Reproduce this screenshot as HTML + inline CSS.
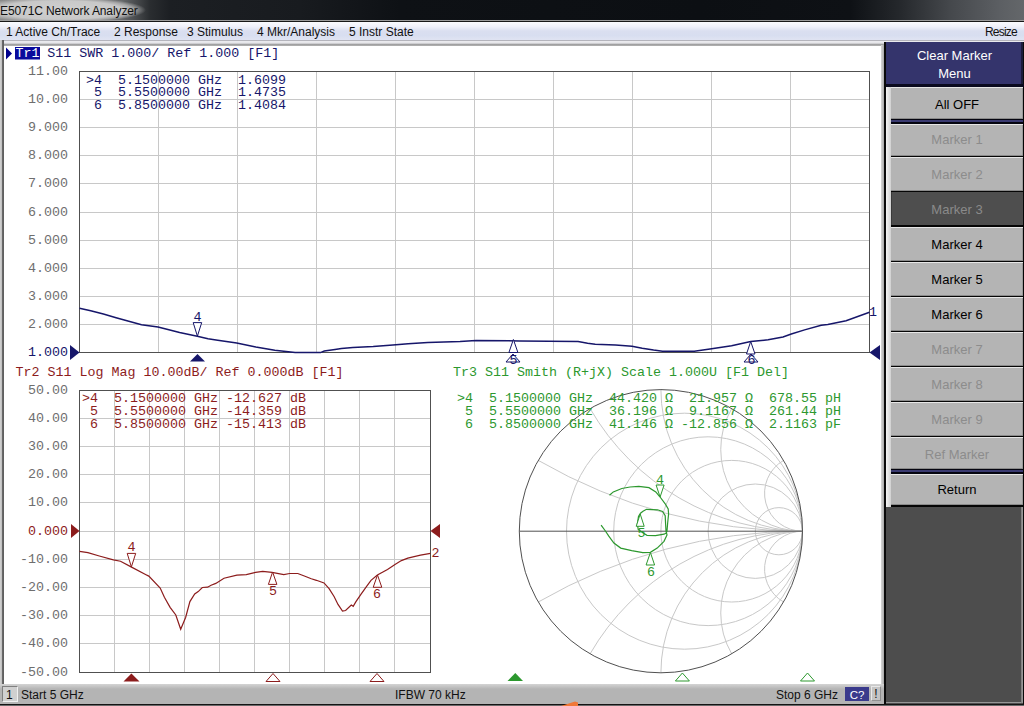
<!DOCTYPE html>
<html><head><meta charset="utf-8">
<style>
html,body{margin:0;padding:0;}
body{width:1024px;height:706px;position:relative;overflow:hidden;background:#4d4d4d;font-family:"Liberation Sans", sans-serif;}
.abs{position:absolute;}
#title{left:0;top:0;width:1024px;height:20px;background:radial-gradient(ellipse 86px 13px at 60px 10px,rgba(208,208,208,1) 0%,rgba(200,200,200,1) 72%,rgba(180,180,180,0.8) 86%,rgba(150,150,150,0) 100%),linear-gradient(90deg,#8a8a8a 0px,#6a6c6e 120px,#2a2d30 150px,#1c1f23 170px,#181b1f 300px,#0e1115 400px,#0c0f13 700px,#0e1115 850px,#25282c 900px,#45484c 950px,#5c5f63 1000px,#64676a 1024px);}
#title span{position:absolute;left:0;top:4px;font-size:12px;color:#101010;letter-spacing:-0.1px;}
#tline{left:0;top:20px;width:1024px;height:1px;background:#9c9c9c;}
#tline2{left:0;top:21px;width:1024px;height:1px;background:#181818;}
#menu{left:0;top:22px;width:1024px;height:18px;background:linear-gradient(#fbfbfe 0%,#f0f1fa 25%,#dadff0 50%,#d8def0 75%,#e0e4f2 100%);font-size:12px;color:#111;}
#menu span{position:absolute;top:3px;}
#mline{left:0;top:40px;width:1024px;height:6px;background:linear-gradient(#b4b4bc 0px,#b4b4bc 1px,#ececf0 1px,#e4e4e8 3px,#8a8a8a 5px,#d0d0d0 6px);}
#main{left:4px;top:46px;width:878px;height:638px;background:#fff;}
#lborder{left:0;top:40px;width:4px;height:664px;background:linear-gradient(90deg,#d4d4d4 0px,#bcbcbc 2px,#6c6c6c 2px,#5c5c5c 4px);}
#rstrip{left:881px;top:45px;width:3px;height:659px;background:linear-gradient(90deg,#d8d8d8,#a8a8a8);}
#rline{left:884px;top:42px;width:2px;height:662px;background:#0a0a0a;}
#status{left:0;top:684px;width:884px;height:20px;background:linear-gradient(#d4d4d4,#b4b4b4 25%,#b4b4b4);font-size:12px;color:#111;}
#status span{position:absolute;top:4px;}
#bline{left:0;top:704px;width:1024px;height:1px;background:#141414;}
#bline2{left:0;top:705px;width:1024px;height:1px;background:#6a6a6a;}
#panel{left:886px;top:42px;width:137px;height:661px;background:#4d4d4d;box-shadow:inset 0 -1px 0 #969696;}
#rpedge{left:1021px;top:507px;width:2px;height:196px;background:linear-gradient(90deg,#7a7a7a,#a0a0a0);}
#rpedge2{left:1023px;top:42px;width:1px;height:664px;background:#0a0a0a;}
#hdr{left:886px;top:42px;width:137px;height:42px;background:#34346c;box-shadow:inset -2px 0 0 #1c1c3c;color:#fff;font-size:13px;text-align:center;line-height:18px;}
#hdrline{left:886px;top:84px;width:138px;height:3px;background:#0a0a1e;}
#kstrip{left:886px;top:87px;width:5px;height:420px;background:linear-gradient(90deg,#f4f4f4,#d0d0d0);}
#kbg{left:891px;top:87px;width:133px;height:420px;background:#050505;}
.sep{position:absolute;left:891px;width:132px;height:5px;background:linear-gradient(#050510 0,#050510 25%,#3a3a70 30%,#3a3a70 65%,#050510 70%);}
.key{position:absolute;left:891px;width:132px;font-size:13px;text-align:center;background:#b4b4b4;box-shadow:inset 0 1px 0 #e6e6e6,inset 0 -1px 0 #8a8a8a,inset -1px 0 0 #9a9a9a;}
#orange{left:562px;top:701px;width:16px;height:10px;background:#f07838;border-radius:50% 50% 0 0;}
svg text.m{font-family:"Liberation Mono", monospace;font-size:13.33px;}
</style></head><body>
<div id="title" class="abs"><span>E5071C Network Analyzer</span></div>
<div id="tline" class="abs"></div>
<div id="tline2" class="abs"></div>
<div id="menu" class="abs"><span style="left:6px">1 Active Ch/Trace</span><span style="left:114px">2 Response</span><span style="left:187px">3 Stimulus</span><span style="left:257px">4 Mkr/Analysis</span><span style="left:349px">5 Instr State</span><span style="left:985px;letter-spacing:-0.8px">Resize</span></div>
<div id="mline" class="abs"></div>
<div id="lborder" class="abs"></div>
<div id="main" class="abs"></div>
<div id="rstrip" class="abs"></div>
<div id="panel" class="abs"></div>
<div id="rline" class="abs"></div>
<div id="rpedge" class="abs"></div>
<div id="rpedge2" class="abs"></div>
<div id="hdr" class="abs"><div style="padding-top:5px">Clear Marker<br>Menu</div></div>
<div id="hdrline" class="abs"></div>
<div id="kstrip" class="abs"></div>
<div id="kbg" class="abs"></div>
<div class="sep" style="top:119px"></div>
<div class="sep" style="top:469px"></div>
<div class="key" style="top:87px;height:32px;line-height:35.0px;color:#000000;">All OFF</div>
<div class="key" style="top:124px;height:32px;line-height:31.0px;color:#8c8c8c;">Marker 1</div>
<div class="key" style="top:157px;height:34px;line-height:35.0px;color:#8c8c8c;">Marker 2</div>
<div class="key" style="top:192px;height:33px;line-height:35.0px;background:#4e4e4e;color:#8a8a8a;box-shadow:inset 1px 0 0 #3a3a3a;">Marker 3</div>
<div class="key" style="top:227px;height:34px;line-height:35.0px;color:#000000;">Marker 4</div>
<div class="key" style="top:262px;height:34px;line-height:35.0px;color:#000000;">Marker 5</div>
<div class="key" style="top:297px;height:34px;line-height:35.0px;color:#000000;">Marker 6</div>
<div class="key" style="top:332px;height:34px;line-height:35.0px;color:#8c8c8c;">Marker 7</div>
<div class="key" style="top:367px;height:34px;line-height:35.0px;color:#8c8c8c;">Marker 8</div>
<div class="key" style="top:402px;height:34px;line-height:35.0px;color:#8c8c8c;">Marker 9</div>
<div class="key" style="top:437px;height:32px;line-height:35.0px;color:#8c8c8c;">Ref Marker</div>
<div class="key" style="top:474px;height:31px;line-height:31.0px;color:#000000;">Return</div>
<div id="status" class="abs"><div class="abs" style="left:2px;top:2px;width:14px;height:14px;background:#d0d0d0;border:1px solid #808080;border-right-color:#f0f0f0;border-bottom-color:#f0f0f0;"></div><span style="left:6px">1</span><span style="left:21px">Start 5 GHz</span><span style="left:395px">IFBW 70 kHz</span><span style="left:776px">Stop 6 GHz</span><div class="abs" style="left:845px;top:3px;width:24px;height:14px;background:#3a3a8c;color:#fff;text-align:center;font-size:11.5px;line-height:16px;">C?</div><div class="abs" style="left:871px;top:2px;width:8px;height:13px;background:#c4c4c4;border:1px solid #e8e8e8;border-right-color:#909090;border-bottom-color:#909090;text-align:center;line-height:15px;">!</div></div>
<div id="bline" class="abs"></div>
<div id="bline2" class="abs"></div>

<svg class="abs" style="left:0;top:0" width="1024" height="706" viewBox="0 0 1024 706">
<line x1="158.5" y1="71.5" x2="158.5" y2="352.5" stroke="#c8c8c8" stroke-width="1"/>
<line x1="237.5" y1="71.5" x2="237.5" y2="352.5" stroke="#c8c8c8" stroke-width="1"/>
<line x1="316.5" y1="71.5" x2="316.5" y2="352.5" stroke="#c8c8c8" stroke-width="1"/>
<line x1="395.5" y1="71.5" x2="395.5" y2="352.5" stroke="#c8c8c8" stroke-width="1"/>
<line x1="474.5" y1="71.5" x2="474.5" y2="352.5" stroke="#c8c8c8" stroke-width="1"/>
<line x1="553.5" y1="71.5" x2="553.5" y2="352.5" stroke="#c8c8c8" stroke-width="1"/>
<line x1="632.5" y1="71.5" x2="632.5" y2="352.5" stroke="#c8c8c8" stroke-width="1"/>
<line x1="711.5" y1="71.5" x2="711.5" y2="352.5" stroke="#c8c8c8" stroke-width="1"/>
<line x1="790.5" y1="71.5" x2="790.5" y2="352.5" stroke="#c8c8c8" stroke-width="1"/>
<line x1="79.5" y1="99.5" x2="869.5" y2="99.5" stroke="#c8c8c8" stroke-width="1"/>
<line x1="79.5" y1="127.5" x2="869.5" y2="127.5" stroke="#c8c8c8" stroke-width="1"/>
<line x1="79.5" y1="155.5" x2="869.5" y2="155.5" stroke="#c8c8c8" stroke-width="1"/>
<line x1="79.5" y1="183.5" x2="869.5" y2="183.5" stroke="#c8c8c8" stroke-width="1"/>
<line x1="79.5" y1="212.5" x2="869.5" y2="212.5" stroke="#c8c8c8" stroke-width="1"/>
<line x1="79.5" y1="240.5" x2="869.5" y2="240.5" stroke="#c8c8c8" stroke-width="1"/>
<line x1="79.5" y1="268.5" x2="869.5" y2="268.5" stroke="#c8c8c8" stroke-width="1"/>
<line x1="79.5" y1="296.5" x2="869.5" y2="296.5" stroke="#c8c8c8" stroke-width="1"/>
<line x1="79.5" y1="324.5" x2="869.5" y2="324.5" stroke="#c8c8c8" stroke-width="1"/>
<rect x="79.5" y="71.5" width="790.0" height="281.0" fill="none" stroke="#505050" stroke-width="1"/>
<text x="68" y="75.3" text-anchor="end" fill="#6e6e6e" class="m">11.00</text>
<text x="68" y="103.3" text-anchor="end" fill="#6e6e6e" class="m">10.00</text>
<text x="68" y="131.3" text-anchor="end" fill="#6e6e6e" class="m">9.000</text>
<text x="68" y="159.3" text-anchor="end" fill="#6e6e6e" class="m">8.000</text>
<text x="68" y="187.3" text-anchor="end" fill="#6e6e6e" class="m">7.000</text>
<text x="68" y="216.3" text-anchor="end" fill="#6e6e6e" class="m">6.000</text>
<text x="68" y="244.3" text-anchor="end" fill="#6e6e6e" class="m">5.000</text>
<text x="68" y="272.3" text-anchor="end" fill="#6e6e6e" class="m">4.000</text>
<text x="68" y="300.3" text-anchor="end" fill="#6e6e6e" class="m">3.000</text>
<text x="68" y="328.3" text-anchor="end" fill="#6e6e6e" class="m">2.000</text>
<text x="68" y="356.3" text-anchor="end" fill="#16166a" class="m">1.000</text>
<polyline points="79.5,308.3 90.7,310.8 103.4,314.0 116.1,317.8 128.8,321.3 141.5,324.8 158.0,326.9 166.9,329.2 179.6,332.4 197.3,336.2 208.0,338.7 217.7,340.3 236.7,343.1 255.8,346.9 274.8,350.2 295.1,352.6 320.5,352.6 324.3,351.1 335.0,349.5 341.4,348.5 352.9,347.5 373.2,346.6 389.7,345.3 396.0,344.7 408.1,343.7 427.8,342.5 460.1,341.5 476.0,340.5 519.7,340.9 578.1,341.5 587.6,343.2 595.2,344.3 615.5,345.1 632.0,346.2 642.2,348.2 653.6,350.1 662.5,351.3 694.3,351.3 710.0,349.1 731.6,345.7 750.7,341.5 768.1,339.8 783.0,336.9 791.3,334.0 804.6,329.9 821.2,325.2 827.8,324.6 846.1,320.8 869.5,312.3" fill="none" stroke="#16166a" stroke-width="1.5"/>
<line x1="114.5" y1="390.5" x2="114.5" y2="672.5" stroke="#c8c8c8" stroke-width="1"/>
<line x1="149.5" y1="390.5" x2="149.5" y2="672.5" stroke="#c8c8c8" stroke-width="1"/>
<line x1="184.5" y1="390.5" x2="184.5" y2="672.5" stroke="#c8c8c8" stroke-width="1"/>
<line x1="219.5" y1="390.5" x2="219.5" y2="672.5" stroke="#c8c8c8" stroke-width="1"/>
<line x1="254.5" y1="390.5" x2="254.5" y2="672.5" stroke="#c8c8c8" stroke-width="1"/>
<line x1="289.5" y1="390.5" x2="289.5" y2="672.5" stroke="#c8c8c8" stroke-width="1"/>
<line x1="324.5" y1="390.5" x2="324.5" y2="672.5" stroke="#c8c8c8" stroke-width="1"/>
<line x1="359.5" y1="390.5" x2="359.5" y2="672.5" stroke="#c8c8c8" stroke-width="1"/>
<line x1="394.5" y1="390.5" x2="394.5" y2="672.5" stroke="#c8c8c8" stroke-width="1"/>
<line x1="79.5" y1="418.5" x2="430.5" y2="418.5" stroke="#c8c8c8" stroke-width="1"/>
<line x1="79.5" y1="446.5" x2="430.5" y2="446.5" stroke="#c8c8c8" stroke-width="1"/>
<line x1="79.5" y1="474.5" x2="430.5" y2="474.5" stroke="#c8c8c8" stroke-width="1"/>
<line x1="79.5" y1="502.5" x2="430.5" y2="502.5" stroke="#c8c8c8" stroke-width="1"/>
<line x1="79.5" y1="531.5" x2="430.5" y2="531.5" stroke="#c8c8c8" stroke-width="1"/>
<line x1="79.5" y1="559.5" x2="430.5" y2="559.5" stroke="#c8c8c8" stroke-width="1"/>
<line x1="79.5" y1="587.5" x2="430.5" y2="587.5" stroke="#c8c8c8" stroke-width="1"/>
<line x1="79.5" y1="615.5" x2="430.5" y2="615.5" stroke="#c8c8c8" stroke-width="1"/>
<line x1="79.5" y1="643.5" x2="430.5" y2="643.5" stroke="#c8c8c8" stroke-width="1"/>
<rect x="79.5" y="390.5" width="351.0" height="282.0" fill="none" stroke="#505050" stroke-width="1"/>
<text x="68" y="394.3" text-anchor="end" fill="#6e6e6e" class="m">50.00</text>
<text x="68" y="422.3" text-anchor="end" fill="#6e6e6e" class="m">40.00</text>
<text x="68" y="450.3" text-anchor="end" fill="#6e6e6e" class="m">30.00</text>
<text x="68" y="478.3" text-anchor="end" fill="#6e6e6e" class="m">20.00</text>
<text x="68" y="506.3" text-anchor="end" fill="#6e6e6e" class="m">10.00</text>
<text x="68" y="535.3" text-anchor="end" fill="#8c1c1c" class="m">0.000</text>
<text x="68" y="563.3" text-anchor="end" fill="#6e6e6e" class="m">-10.00</text>
<text x="68" y="591.3" text-anchor="end" fill="#6e6e6e" class="m">-20.00</text>
<text x="68" y="619.3" text-anchor="end" fill="#6e6e6e" class="m">-30.00</text>
<text x="68" y="647.3" text-anchor="end" fill="#6e6e6e" class="m">-40.00</text>
<text x="68" y="676.3" text-anchor="end" fill="#6e6e6e" class="m">-50.00</text>
<polyline points="79.5,551.3 87.9,552.7 99.3,556.0 113.4,559.8 120.5,561.2 131.1,566.9 146.0,574.7 148.8,576.1 160.2,588.1 164.4,597.3 170.1,607.3 175.8,615.0 180.7,629.2 185.7,617.2 189.9,601.6 194.7,594.0 198.2,591.6 202.3,587.5 207.6,587.2 211.1,585.2 215.8,583.4 224.0,578.2 236.9,575.2 246.3,574.6 255.6,572.3 262.7,571.4 272.0,572.3 283.8,574.6 289.6,573.5 297.8,573.5 303.7,575.8 311.3,578.8 316.4,580.3 324.0,582.9 329.1,588.6 334.2,596.8 338.0,604.4 342.5,611.0 345.6,610.5 351.3,605.1 353.2,606.3 355.8,601.9 360.9,594.3 365.9,587.3 371.0,580.3 377.4,575.0 387.5,569.5 395.0,564.4 401.4,560.6 407.8,558.1 420.5,555.2 430.5,553.3" fill="none" stroke="#8c1c1c" stroke-width="1.2"/>
<circle cx="684.50" cy="531.20" r="118.00" fill="none" stroke="#c8c8c8" stroke-width="1"/>
<circle cx="708.10" cy="531.20" r="94.40" fill="none" stroke="#c8c8c8" stroke-width="1"/>
<circle cx="731.70" cy="531.20" r="70.80" fill="none" stroke="#c8c8c8" stroke-width="1"/>
<circle cx="755.30" cy="531.20" r="47.20" fill="none" stroke="#c8c8c8" stroke-width="1"/>
<circle cx="778.90" cy="531.20" r="23.60" fill="none" stroke="#c8c8c8" stroke-width="1"/>
<path d="M538.27,460.40 A528.46,528.46 0 0 0 802.50,531.20" fill="none" stroke="#c8c8c8" stroke-width="1"/>
<path d="M538.27,602.00 A528.46,528.46 0 0 1 802.50,531.20" fill="none" stroke="#c8c8c8" stroke-width="1"/>
<path d="M590.10,408.57 A245.26,245.26 0 0 0 802.50,531.20" fill="none" stroke="#c8c8c8" stroke-width="1"/>
<path d="M590.10,653.83 A245.26,245.26 0 0 1 802.50,531.20" fill="none" stroke="#c8c8c8" stroke-width="1"/>
<path d="M660.90,389.60 A141.60,141.60 0 0 0 802.50,531.20" fill="none" stroke="#c8c8c8" stroke-width="1"/>
<path d="M660.90,672.80 A141.60,141.60 0 0 1 802.50,531.20" fill="none" stroke="#c8c8c8" stroke-width="1"/>
<path d="M731.70,408.57 A81.75,81.75 0 0 0 802.50,531.20" fill="none" stroke="#c8c8c8" stroke-width="1"/>
<path d="M731.70,653.83 A81.75,81.75 0 0 1 802.50,531.20" fill="none" stroke="#c8c8c8" stroke-width="1"/>
<path d="M783.53,460.40 A37.94,37.94 0 0 0 802.50,531.20" fill="none" stroke="#c8c8c8" stroke-width="1"/>
<path d="M783.53,602.00 A37.94,37.94 0 0 1 802.50,531.20" fill="none" stroke="#c8c8c8" stroke-width="1"/>
<line x1="519.3" y1="531.2" x2="802.5" y2="531.2" stroke="#505050" stroke-width="1"/>
<circle cx="660.9" cy="531.2" r="141.6" fill="none" stroke="#505050" stroke-width="1"/>
<polyline points="609.5,495.3 613.3,491.9 621.8,488.5 630.0,487.0 638.8,486.4 649.0,487.7 655.8,491.9 660.1,497.0 665.2,503.8 668.2,508.9 668.6,514.0 667.7,522.5 667.0,531.0 666.2,533.0 664.0,534.2 655.5,535.6 647.0,535.3 642.8,532.8 638.2,529.5 637.4,524.0 638.5,516.5 640.5,513.2 643.0,511.2 646.5,509.3 657.5,509.8 662.6,511.5 665.2,515.7 665.6,524.0 666.0,531.0 667.0,534.9 664.0,541.3 657.2,548.1 650.4,552.3 642.8,552.7 631.7,550.6 620.7,548.1 613.9,543.0 608.8,536.2 605.4,531.0 601.1,525.1" fill="none" stroke="#2c982e" stroke-width="1.2"/>
<polygon points="193.2,322.6 201.7,322.6 197.4,336.2" fill="white" stroke="#16166a" stroke-width="1"/>
<text x="197.5" y="320.5" text-anchor="middle" fill="#16166a" class="m">4</text>
<polygon points="508.9,352.5 517.9,352.5 513.4,339.5" fill="white" stroke="#16166a" stroke-width="1"/>
<polygon points="746.5,354.0 755.0,354.0 750.7,341.5" fill="white" stroke="#16166a" stroke-width="1"/>
<polygon points="506.0,362.0 520.0,362.0 513.0,354.0" fill="white" stroke="#16166a" stroke-width="1"/>
<polygon points="744.0,362.0 758.0,362.0 751.0,354.0" fill="white" stroke="#16166a" stroke-width="1"/>
<text x="513.5" y="363.5" text-anchor="middle" fill="#16166a" class="m">5</text>
<text x="751.5" y="363.5" text-anchor="middle" fill="#16166a" class="m">6</text>
<polygon points="190,361.5 205,361.5 197.5,354" fill="#16166a"/>
<polygon points="70,345 79.5,352.5 70,360" fill="#16166a"/>
<polygon points="880,345 869.5,352.5 880,360" fill="#16166a"/>
<text x="869" y="316" fill="#16166a" class="m">1</text>
<polygon points="127.2,553.4 135.7,553.4 131.4,566.9" fill="white" stroke="#8c1c1c" stroke-width="1"/>
<text x="131.4" y="551" text-anchor="middle" fill="#8c1c1c" class="m">4</text>
<polygon points="268.4,584.4 276.9,584.4 272.6,572.0" fill="white" stroke="#8c1c1c" stroke-width="1"/>
<text x="272.9" y="595" text-anchor="middle" fill="#8c1c1c" class="m">5</text>
<polygon points="373.2,587.3 381.8,587.3 377.5,575.0" fill="white" stroke="#8c1c1c" stroke-width="1"/>
<text x="377" y="598" text-anchor="middle" fill="#8c1c1c" class="m">6</text>
<polygon points="123.5,681.5 139.5,681.5 131.4,673.5" fill="#8c1c1c"/>
<polygon points="266.0,681.5 280.0,681.5 273.0,673.5" fill="white" stroke="#8c1c1c" stroke-width="1"/>
<polygon points="370.0,681.5 384.0,681.5 377.0,673.5" fill="white" stroke="#8c1c1c" stroke-width="1"/>
<polygon points="71,524 79.5,531 71,538" fill="#8c1c1c"/>
<polygon points="440,524 430.5,531 440,538" fill="#8c1c1c"/>
<text x="431.5" y="556.5" fill="#8c1c1c" class="m">2</text>
<polygon points="656.1,485.0 664.1,485.0 660.1,497.0" fill="white" stroke="#2c982e" stroke-width="1"/>
<text x="660" y="483.5" text-anchor="middle" fill="#2c982e" class="m">4</text>
<polygon points="636.2,526.3 644.2,526.3 640.2,514.0" fill="white" stroke="#2c982e" stroke-width="1"/>
<text x="641.5" y="537" text-anchor="middle" fill="#2c982e" class="m">5</text>
<polygon points="646.1,565.0 654.6,565.0 650.4,552.5" fill="white" stroke="#2c982e" stroke-width="1"/>
<text x="651" y="576" text-anchor="middle" fill="#2c982e" class="m">6</text>
<polygon points="507.5,681 523,681 515.3,673" fill="#2c982e"/>
<polygon points="675.4,681.0 689.4,681.0 682.4,673.0" fill="white" stroke="#2c982e" stroke-width="1"/>
<polygon points="800.5,681.0 814.5,681.0 807.5,673.0" fill="white" stroke="#2c982e" stroke-width="1"/>
<polygon points="6,47.5 12,53.5 6,59.5" fill="#00008c"/>
<rect x="15" y="47" width="25" height="12.5" fill="#0a0a9c"/>
<text x="15.5" y="57" fill="#ffffff" class="m" xml:space="preserve">Tr1</text>
<text x="47.2" y="57" fill="#16166a" class="m" xml:space="preserve">S11 SWR 1.000/ Ref 1.000 [F1]</text>
<text x="86" y="83.6" fill="#16166a" class="m" xml:space="preserve">&gt;4  5.1500000 GHz  1.6099</text>
<text x="86" y="96.2" fill="#16166a" class="m" xml:space="preserve"> 5  5.5500000 GHz  1.4735</text>
<text x="86" y="108.7" fill="#16166a" class="m" xml:space="preserve"> 6  5.8500000 GHz  1.4084</text>
<text x="15.5" y="376" fill="#8c1c1c" class="m" xml:space="preserve">Tr2 S11 Log Mag 10.00dB/ Ref 0.000dB [F1]</text>
<text x="82" y="402" fill="#8c1c1c" class="m" xml:space="preserve">&gt;4  5.1500000 GHz -12.627 dB</text>
<text x="82" y="414.5" fill="#8c1c1c" class="m" xml:space="preserve"> 5  5.5500000 GHz -14.359 dB</text>
<text x="82" y="427.5" fill="#8c1c1c" class="m" xml:space="preserve"> 6  5.8500000 GHz -15.413 dB</text>
<text x="453" y="376" fill="#2c982e" class="m" xml:space="preserve">Tr3 S11 Smith (R+jX) Scale 1.000U [F1 Del]</text>
<text x="457" y="402" fill="#2c982e" class="m" xml:space="preserve">&gt;4  5.1500000 GHz  44.420 Ω  21.957 Ω  678.55 pH</text>
<text x="457" y="414.5" fill="#2c982e" class="m" xml:space="preserve"> 5  5.5500000 GHz  36.196 Ω  9.1167 Ω  261.44 pH</text>
<text x="457" y="428" fill="#2c982e" class="m" xml:space="preserve"> 6  5.8500000 GHz  41.146 Ω -12.856 Ω  2.1163 pF</text>
<polygon points="561,706 575,701.5 578,702.5 578,706" fill="#f07838"/>
</svg>
</body></html>
